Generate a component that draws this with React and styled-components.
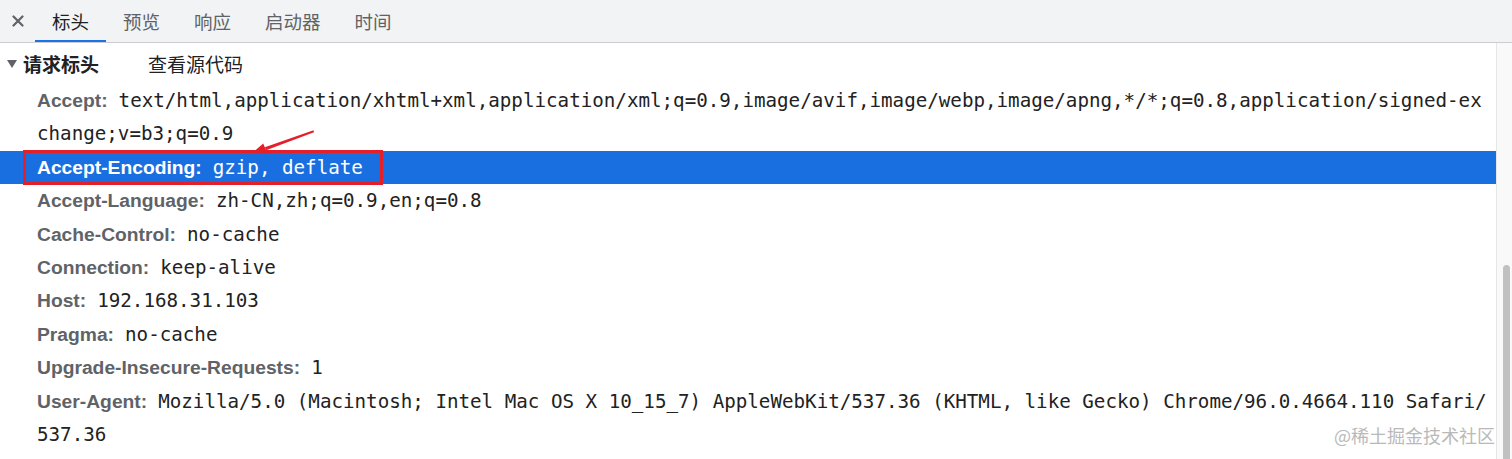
import React from 'react';
import styled, { createGlobalStyle } from 'styled-components';

const Global = createGlobalStyle`
  html, body { margin: 0; padding: 0; background: #fff; }
  body { width: 1512px; height: 459px; overflow: hidden; }
`;

const Panel = styled.div`
  width: 1512px;
  height: 459px;
  display: flex;
  flex-direction: column;
  background: #fff;
  overflow: hidden;
`;

const TabBar = styled.div`
  flex: 0 0 42px;
  height: 42px;
  display: flex;
  align-items: stretch;
  background: #f1f3f4;
  border-bottom: 1px solid #cbcdd1;
`;

const CloseBtn = styled.div`
  width: 35px;
  display: flex;
  align-items: center;
  justify-content: center;
`;

const Tab = styled.div`
  padding: 0 17px;
  display: flex;
  align-items: center;
  font-family: "Noto Sans CJK SC", "Noto Sans", sans-serif;
  font-size: 18.5px;
  color: ${p => (p.$active ? '#202124' : '#5f6368')};
  box-shadow: inset 0 -2px 0 ${p => (p.$active ? '#1a73e8' : 'transparent')};
`;

const Body = styled.div`
  flex: 1;
  display: flex;
  min-height: 0;
`;

const Content = styled.div`
  flex: 1;
  position: relative;
  overflow: hidden;
`;

const SectionHeader = styled.div`
  height: 41px;
  display: flex;
  align-items: center;
  padding-left: 7px;
  font-family: "Noto Sans CJK SC", sans-serif;
  font-size: 19px;
  color: #202124;
`;

const Triangle = styled.span`
  width: 0;
  height: 0;
  border-left: 5px solid transparent;
  border-right: 5px solid transparent;
  border-top: 8px solid #5f6368;
  margin-top: 1px;
`;

const SectionTitle = styled.span`
  margin-left: 6px;
  font-weight: 700;
`;

const SourceLink = styled.span`
  margin-left: 49px;
  font-weight: 400;
`;

const Row = styled.div`
  position: relative;
  padding: 0 8px 0 37px;
  line-height: 33.4px;
  font-family: "DejaVu Sans Mono", monospace;
  font-size: 19.2px;
  word-break: break-all;
  background: ${p => (p.$selected ? '#1a6fe0' : 'transparent')};
`;

const Key = styled.span`
  font-family: "Liberation Sans", Arial, sans-serif;
  font-weight: 700;
  font-size: 19.25px;
  color: ${p => (p.$selected ? '#ffffff' : '#5f6368')};
  margin-right: 11px;
`;

const Value = styled.span`
  color: ${p => (p.$selected ? '#ffffff' : '#222222')};
`;

const RedBox = styled.div`
  position: absolute;
  left: 23px;
  top: -1px;
  width: 360px;
  height: 35px;
  box-sizing: border-box;
  border: 3px solid #e3202a;
  pointer-events: none;
`;

const Arrow = styled.svg`
  position: absolute;
  left: 240px;
  top: -25px;
  overflow: visible;
`;

const Watermark = styled.div`
  position: absolute;
  right: 1px;
  bottom: 11px;
  font-family: "Noto Sans CJK SC", sans-serif;
  font-size: 18px;
  color: #b9b9b9;
`;

const ScrollTrack = styled.div`
  width: 16px;
  flex: 0 0 16px;
  display: flex;
  flex-direction: column;
  background: #f9f9f9;
  border-left: 1px solid #e6e6e6;
  padding: 0 2px 0 6px;
  box-sizing: border-box;
`;

const Thumb = styled.div`
  margin-top: 222px;
  flex: 1;
  border-radius: 4px 4px 0 0;
  background: #c1c1c1;
`;

const tabs = ['标头', '预览', '响应', '启动器', '时间'];

const headers = [
  ['Accept:', 'text/html,application/xhtml+xml,application/xml;q=0.9,image/avif,image/webp,image/apng,*/*;q=0.8,application/signed-exchange;v=b3;q=0.9'],
  ['Accept-Encoding:', 'gzip, deflate', true],
  ['Accept-Language:', 'zh-CN,zh;q=0.9,en;q=0.8'],
  ['Cache-Control:', 'no-cache'],
  ['Connection:', 'keep-alive'],
  ['Host:', '192.168.31.103'],
  ['Pragma:', 'no-cache'],
  ['Upgrade-Insecure-Requests:', '1'],
  ['User-Agent:', 'Mozilla/5.0 (Macintosh; Intel Mac OS X 10_15_7) AppleWebKit/537.36 (KHTML, like Gecko) Chrome/96.0.4664.110 Safari/537.36'],
];

export default function App() {
  return (
    <Panel>
      <Global />
      <TabBar>
        <CloseBtn>
          <svg width="12" height="12" viewBox="0 0 12 12">
            <path d="M1.5 1.5 L10.5 10.5 M10.5 1.5 L1.5 10.5" stroke="#5f6368" strokeWidth="2.2" strokeLinecap="round" />
          </svg>
        </CloseBtn>
        {tabs.map((t, i) => (
          <Tab key={t} $active={i === 0}>{t}</Tab>
        ))}
      </TabBar>
      <Body>
        <Content>
          <SectionHeader>
            <Triangle />
            <SectionTitle>请求标头</SectionTitle>
            <SourceLink>查看源代码</SourceLink>
          </SectionHeader>
          {headers.map(([k, v, sel]) => (
            <Row key={k} $selected={sel}>
              <Key $selected={sel}>{k}</Key>
              <Value $selected={sel}>{v}</Value>
              {sel && (
                <>
                  <RedBox />
                  <Arrow width="80" height="35" viewBox="0 0 80 35">
                    <polygon points="73.5,4.2 74,6.2 26,24.2 24.8,21.2" fill="#e3202a" />
                    <polygon points="12,27.2 23.2,17.4 27.4,27.6" fill="#e3202a" />
                  </Arrow>
                </>
              )}
            </Row>
          ))}
          <Watermark>@稀土掘金技术社区</Watermark>
        </Content>
        <ScrollTrack>
          <Thumb />
        </ScrollTrack>
      </Body>
    </Panel>
  );
}
